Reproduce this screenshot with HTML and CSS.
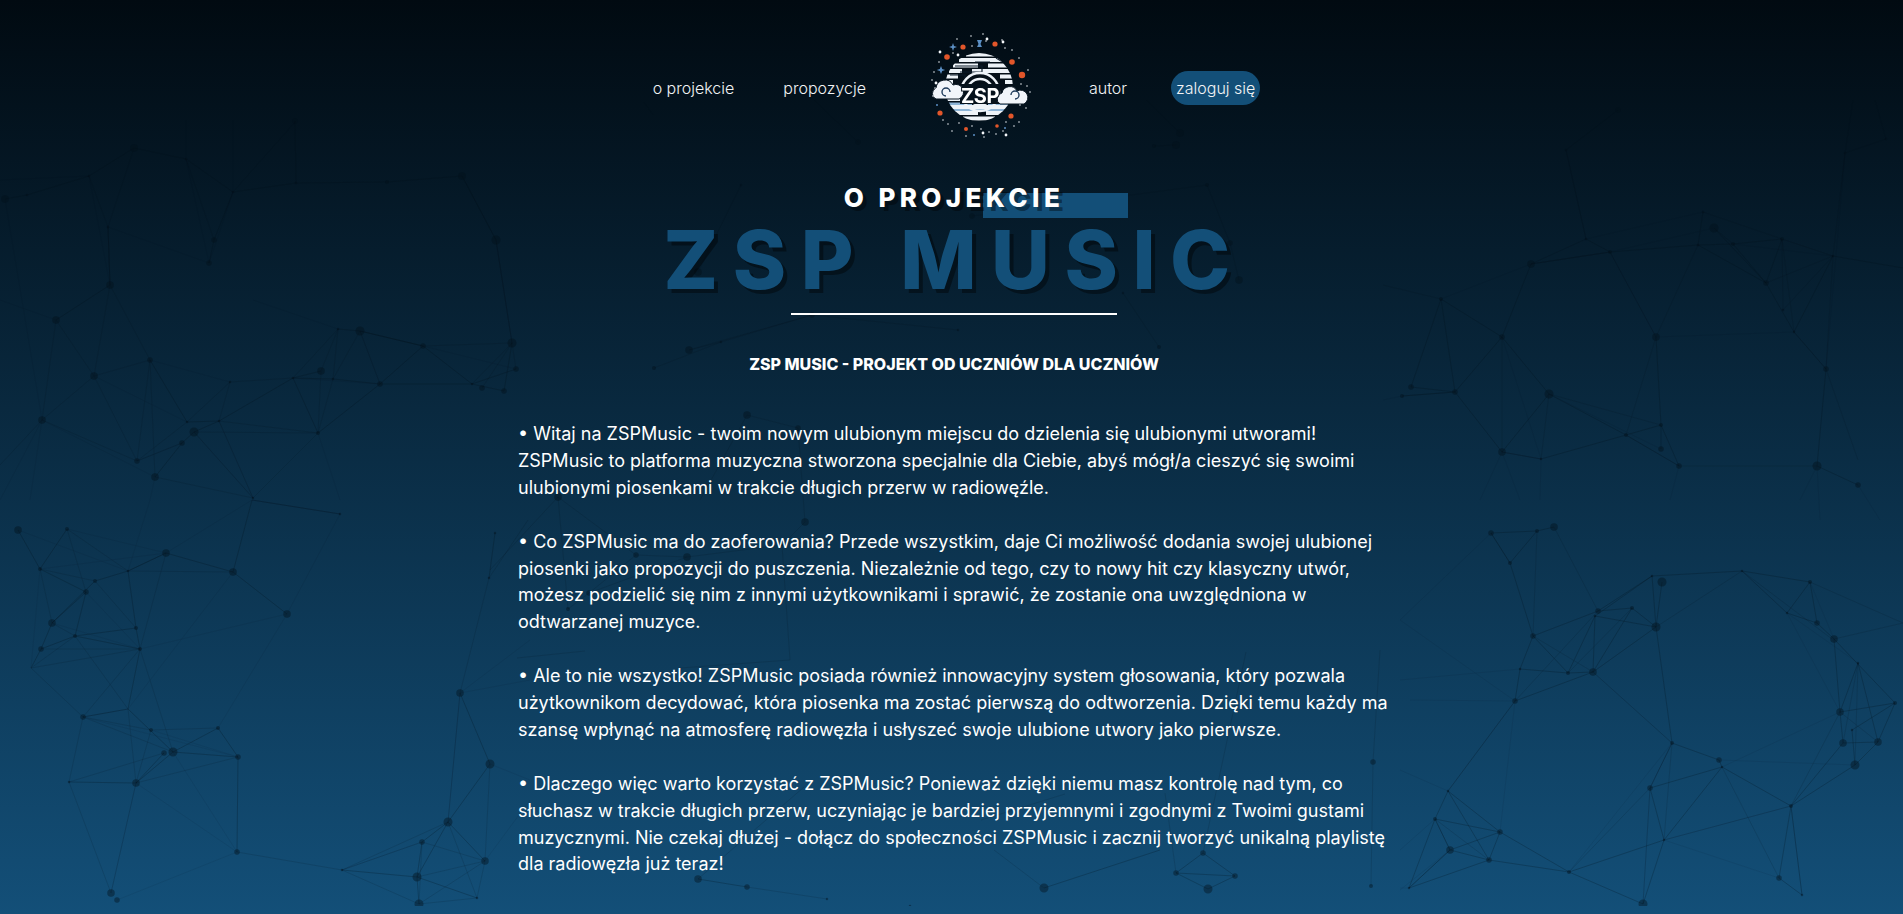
FILE: index.html
```html
<!DOCTYPE html>
<html lang="pl">
<head>
<meta charset="utf-8">
<title>ZSP Music</title>
<link rel="stylesheet" href="styles.css">
</head>
<body>
<svg class="net" viewBox="0 0 1903 906" width="1903" height="906" aria-hidden="true">
  <path class="l1" d="M18 530L40 569M67 529L40 569M40 569L86 592M95 581L52 623M86 592L52 623M166 553L128 571L95 581M86 592L75 636M128 571L136 628M52 623L41 649M75 636L41 649M41 649L31 668M140 649L128 709M128 709L83 717M128 709L173 752M173 752L218 728M173 752L238 757M218 728L238 757M173 752L136 783M164 753L136 783M69 782L136 783M233 572L287 614M166 553L233 572M233 572L252 500M238 757L237 852M342 870L417 877M448 822L422 842M448 822L417 877M422 842L417 877M417 877L477 898M417 877L419 904M448 822L485 861M448 822L490 764M460 693L490 764M489 578L495 533M252 500L340 514M136 628L140 649M75 636L136 628M75 636L140 649"/>
  <path class="l1" d="M134 148L186 159L233 192L296 183M89 176L134 148M27 195L89 176M5 199L27 195M233 192L214 240L209 263M108 227L110 285M110 285L56 320M150 360L187 422M137 461L182 443L194 432L219 421L293 378M155 477L182 443M187 422L219 421M293 378L333 379L380 384L423 346L472 384M380 384L472 384M338 329L360 331L423 346M472 384L504 391M423 346L360 331M472 384L516 369M512 343L504 391M296 183L387 182L462 176L496 240L512 343M295 121L296 183M318 433L380 384M293 378L318 433M321 371L293 378"/>
  <path class="l1" d="M1618 110L1566 150L1586 239L1610 252L1531 264L1502 337M1586 239L1531 264M1441 299L1502 337M1441 299L1411 387M1441 299L1455 392M1411 387L1455 392M1402 396L1455 392M1502 337L1455 392M1502 337L1549 394M1455 392L1502 452M1549 394L1502 452M1549 394L1626 435M1502 452L1541 459L1626 435M1626 435L1661 425L1661 449M1626 435L1679 466M1661 425L1679 466M1656 337L1661 425M1610 252L1698 245L1733 244L1782 239M1714 228L1766 283L1794 332L1826 369M1703 212L1698 245M1733 244L1766 283M1782 239L1766 283M1782 239L1833 256L1903 268M1833 256L1794 332M1817 466L1858 485M1826 369L1817 466M1698 245L1766 283"/>
  <path class="l1" d="M1491 533L1537 531L1554 527M1537 531L1510 563M1491 533L1510 563M1510 563L1533 636M1598 611L1652 576M1595 616L1652 576M1598 611L1632 608L1656 627M1595 616L1656 627M1652 576L1656 627M1662 582L1656 627M1533 636L1598 611M1533 636L1520 669M1533 636L1568 673M1520 669L1568 673L1593 672M1595 616L1593 672M1568 673L1595 616M1515 701L1520 669M1515 701L1593 672M1593 672L1656 627M1632 608L1593 672M1652 576L1742 571L1810 582L1787 613L1817 623M1810 582L1817 623M1742 571L1787 613M1817 623L1834 639L1895 703M1834 639L1840 712M1858 663L1840 712M1858 663L1878 742M1840 712L1895 703M1843 743L1878 742M1855 765L1878 742M1855 765L1852 730M1895 703L1878 742M1843 743L1840 712M1852 730L1895 703M1672 743L1719 760L1722 767M1672 743L1650 788M1650 788L1722 767M1650 788L1664 840M1722 767L1664 840M1722 767L1791 806L1855 765M1791 806L1843 743M1791 806L1779 878M1791 806L1802 895M1779 878L1802 895M1656 627L1672 743M1664 840L1643 904M1448 791L1435 819L1450 850M1448 791L1500 832L1489 860L1450 850L1500 832M1448 791L1489 860M1435 819L1500 832M1435 819L1409 888M1409 888L1450 850M1409 888L1489 860M1489 860L1569 872L1500 832M1569 872L1643 904M1569 872L1664 840M1176 873L1235 876L1203 853L1176 873M1208 889L1235 876M1176 873L1208 889M1044 888L1160 850M698 879L747 887"/>
  <path class="l2" d="M67 529L128 571M128 571L166 553M40 569L52 623M40 569L95 581M67 529L86 592M95 581L136 628M75 636L52 623M31 668L75 636M31 668L140 649M41 649L140 649M75 636L128 709M140 649L83 717M31 668L83 717M83 717L151 730L218 728M83 717L173 752M128 709L136 783M151 730L136 783M140 649L173 752M83 717L69 782M69 782L164 753M136 783L238 757M136 783L111 893M69 782L111 893M128 571L233 572M166 553L140 649M342 870L448 822M342 870L422 842M342 870L419 904M422 842L485 861M417 877L485 861M448 822L477 898M422 842L419 904M419 904L477 898M485 861L477 898M485 861L419 904M485 861L490 764M460 693L448 822M237 852L342 870M460 693L489 578M489 578L528 520"/>
  <path class="l2" d="M134 148L108 227M89 176L108 227M108 227L110 285M56 320L94 376L110 285M94 376L150 360L110 285M42 420L94 376M56 320L42 420M94 376L137 461M150 360L137 461M155 477L150 360M187 422L137 461M230 382L187 422M230 382L219 421M230 382L293 378M194 432L318 433M219 421L318 433M321 371L318 433M338 329L333 379M338 329L293 378M360 331L333 379M360 331L380 384M338 329L321 371M333 379L318 433M512 343L423 346M512 343L482 388M512 343L472 384M155 477L253 498M194 432L253 498M318 433L253 498M219 421L253 498M42 420L0 465M42 420L137 461M512 343L516 369M186 159L214 240M233 192L296 121M462 176L496 240"/>
  <path class="l2" d="M1549 394L1661 425M1502 337L1502 452M1656 337L1626 435M1531 264L1610 252M1733 244L1714 228M1703 212L1782 239M1766 283L1833 256M1782 239L1794 332M1782 239L1783 310M1833 256L1783 310M1833 256L1845 153L1853 100M1845 153L1886 139L1875 100M1826 369L1833 256M1826 369L1858 460M1817 466L1679 466M1402 396L1455 392M1541 459L1549 394M1383 285L1441 299M1656 337L1610 252M1656 337L1698 245"/>
  <path class="l2" d="M1554 527L1598 611M1491 533L1510 563M1537 531L1533 636M1533 636L1593 672M1568 673L1632 608M1515 701L1598 611M1515 701L1448 791M1656 627L1742 571M1593 672L1672 743M1742 571L1832 639M1810 582L1903 623M1834 639L1903 623M1858 663L1855 765M1840 712L1878 742M1843 743L1858 663M1650 788L1643 904M1672 743L1664 840M1722 767L1779 878M1664 840L1791 806M1840 712L1791 806M1569 872L1650 788M1435 819L1450 850M1450 850L1409 888M1489 860L1435 819M1448 791L1515 701"/>
  <path class="l2" d="M747 415L798 428M747 415L700 500M558 497L636 555M636 555L687 557L782 545L805 522M589 593L636 555M589 593L568 609M568 609L558 497M558 497L490 570M687 557L589 593M798 428L805 522M698 879L804 787M747 887L827 899M1044 888L994 850M1065 794L981 820M1165 793L1176 873M1373 762L1371 886M1380 650L1373 762M1246 652L1203 853M585 651L517 658M680 668L790 660M790 660L782 545M972 216L1207 185M698 272L741 185M812 315L689 350M689 350L721 342L654 368M812 315L721 342M1123 293L1159 347M1230 243L1239 280M1207 185L1230 243M644 102L653 115M814 100L858 142M1146 100L1180 133M1154 146L1176 145M958 330L812 315"/>
  <path class="l3" d="M18 530L128 571M67 529L166 553M40 569L166 553M31 668L40 569M86 592L140 649M52 623L140 649M83 717L128 709M83 717L238 757M151 730L238 757M136 783L237 852M173 752L237 852M117 900L237 852M111 893L136 783M287 614L140 649M233 572L128 709M218 728L287 614M287 614L340 514M422 842L342 870M448 822L460 693M460 693L530 640M460 693L530 680M490 764L530 780M485 861L530 800M340 514L252 500M166 553L252 500M128 571L150 500"/>
  <path class="l3" d="M0 300L56 320M5 199L42 420M89 176L110 285M186 159L209 263M108 227L209 263M233 192L209 263M0 180L89 176M186 120L186 159M233 120L233 192M94 376L187 422M42 420L155 477M42 420L0 500M42 420L30 500M155 477L150 500M219 421L253 498M194 432L253 498M360 331L380 384M318 433L340 500M338 329L253 300M230 382L150 360M380 384L293 378M516 369L423 346M496 240L512 343"/>
  <path class="l3" d="M1502 337L1541 459M1502 452L1541 459M1502 452L1480 500M1541 459L1540 500M1502 452L1520 500M1679 466L1670 500M1817 466L1800 500M1817 466L1820 520M1858 485L1880 520M1656 337L1794 332M1610 252L1656 337M1531 264L1441 299M1586 239L1703 212M1610 252L1714 228M1733 244L1833 256M1826 369L1794 332M1586 239L1566 150M1845 153L1826 369M1661 449L1549 394M1679 466L1626 435M1402 396L1383 400"/>
  <path class="l3" d="M1491 533L1400 620M1515 701L1400 620M1515 701L1410 700M1520 669L1400 680M1593 672L1672 743M1672 743L1650 788M1855 765L1719 760M1840 712L1722 767M1787 613L1858 663M1810 582L1834 639M1840 712L1787 613M1791 806L1664 840M1802 895L1791 806M1664 840L1779 878M1643 904L1650 788M1569 872L1672 743M1448 791L1400 770M1435 819L1400 850M1409 888L1400 888M1450 850L1400 890M1515 701L1500 832"/>
  <path class="n1" d="M340 514h.01M489 578h.01M495 533h.01M128 571h.01M69 782h.01M342 870h.01M477 898h.01M186 159h.01M296 183h.01M233 192h.01M89 176h.01M27 195h.01M108 227h.01M187 422h.01M219 421h.01M230 382h.01M293 378h.01M333 379h.01M338 329h.01M472 384h.01M253 498h.01M1566 150h.01M1586 239h.01M1541 459h.01M1794 332h.01M1783 310h.01M1833 256h.01M1698 245h.01M1703 212h.01M1845 153h.01M1886 139h.01M1652 576h.01M1742 571h.01M1787 613h.01M1858 663h.01M1852 730h.01M1595 616h.01M1520 669h.01M1722 767h.01M1664 840h.01M1448 791h.01M1409 888h.01M1802 895h.01M721 342h.01M1123 293h.01M958 330h.01M741 185h.01M782 545h.01M910 906h.01M827 899h.01"/>
  <path class="n2" d="M67 529h.01M40 569h.01M95 581h.01M136 628h.01M75 636h.01M140 649h.01M151 730h.01M218 728h.01M318 433h.01M387 182h.01M1402 396h.01M1626 435h.01M1610 252h.01M1733 244h.01M1782 239h.01M1441 299h.01M1661 425h.01M1537 531h.01M1510 563h.01M1810 582h.01M1895 703h.01M1568 673h.01M1672 743h.01M1791 806h.01M1435 819h.01M1632 608h.01M1569 872h.01M654 368h.01M1159 347h.01M1207 185h.01M568 609h.01M1371 886h.01M1154 146h.01"/>
  <path class="n3" d="M86 592h.01M41 649h.01M83 717h.01M164 753h.01M238 757h.01M237 852h.01M422 842h.01M117 900h.01M516 369h.01M150 360h.01M214 240h.01M209 263h.01M295 121h.01M137 461h.01M182 443h.01M380 384h.01M423 346h.01M482 388h.01M504 391h.01M1411 387h.01M1455 392h.01M1502 337h.01M1766 283h.01M1826 369h.01M1858 485h.01M1618 110h.01M1661 449h.01M1679 466h.01M1491 533h.01M1817 623h.01M1598 611h.01M1533 636h.01M1515 701h.01M1650 788h.01M1500 832h.01M1489 860h.01M1719 760h.01M1779 878h.01M747 887h.01M1373 762h.01M1230 243h.01M812 315h.01M972 216h.01M798 428h.01M636 555h.01M589 593h.01M858 142h.01M1176 873h.01M1235 876h.01M1203 853h.01"/>
  <path class="n4" d="M18 530h.01M166 553h.01M233 572h.01M287 614h.01M52 623h.01M136 783h.01M111 893h.01M460 693h.01M485 861h.01M134 148h.01M110 285h.01M5 199h.01M56 320h.01M94 376h.01M42 420h.01M155 477h.01M321 371h.01M462 176h.01M1531 264h.01M1656 337h.01M1502 452h.01M1840 712h.01M1878 742h.01M1554 527h.01M1593 672h.01M1834 639h.01M1843 743h.01M1450 850h.01M558 497h.01M805 522h.01M687 557h.01M747 415h.01M698 272h.01M1239 280h.01M689 350h.01M698 879h.01M1180 133h.01M1176 145h.01"/>
  <path class="n5" d="M173 752h.01M448 822h.01M417 877h.01M419 904h.01M490 764h.01M194 432h.01M360 331h.01M512 343h.01M496 240h.01M1549 394h.01M1714 228h.01M1817 466h.01M1662 582h.01M1656 627h.01M1855 765h.01M1643 904h.01M1044 888h.01M1208 889h.01"/>
</svg>

<header class="nav">
  <a class="nav-link" href="#projekt">o projekcie</a>
  <a class="nav-link" href="#propozycje">propozycje</a>
  <a class="logo" href="#" aria-label="ZSP Music">
    <svg viewBox="910 18 135 135" width="135" height="135">
      <defs>
        <clipPath id="sphere"><circle cx="979" cy="87" r="34"/></clipPath>
      </defs>
      <g clip-path="url(#sphere)">
        <rect x="940" y="50" width="80" height="75" fill="#050f18"/>
        <path class="lg-w" d="M966 54.500H998M959 60H1008M953 65.500H978M988 65.500H1012M949 71H962M972 71H1014M946 76.500H958M1000 76.500H1014M945 82H953M1005 82H1014"/>
        <path class="lg-blue" d="M947 104H972M988 104H1012M950 110H1008"/>
        <path class="lg-w" d="M946 99H966M992 99H1013M949 107H1010M955 113H978M986 113H1004M963 118.500H995"/>
        <path class="lg-d" d="M955 66H982V72H960M996 58L1006 64M975 62H990M950 75H965V80"/>
        <circle class="lg-ring" cx="980" cy="92" r="19"/>
        <circle class="lg-ring" cx="980" cy="92" r="13"/>
      </g>
      <rect class="lg-gap" x="960" y="84" width="40" height="20"/>
      <path class="lg-cloud" d="M936 99a6 6 0 0 1 0-11a9 9 0 0 1 17-3a7 7 0 0 1 6 14z"/>
      <path class="lg-cloud" d="M1000 104a6 6 0 0 1 2-11a8 8 0 0 1 15-2a7 7 0 0 1 7 13z"/>
      <path class="lg-swirl" d="M950 92a4 4 0 1 0-4 4M1015 99a4 4 0 1 0-4-4"/>
      <text class="lg-text" x="980" y="103" text-anchor="middle">ZSP</text>
      <g class="lg-or">
        <circle cx="963" cy="47" r="2.600"/><circle cx="995" cy="44" r="2.600"/><circle cx="947" cy="57" r="2.800"/><circle cx="1012" cy="62" r="2.800"/><circle cx="1022" cy="75" r="3.200"/><circle cx="940" cy="113" r="2.600"/><circle cx="1011" cy="116" r="2.600"/><circle cx="966" cy="129" r="2"/><circle cx="997" cy="126" r="1.800"/>
      </g>
      <g class="lg-bl">
        <path d="M941 66l1.200 3 3 1-3 1-1.200 3-1.200-3-3-1 3-1zM953 43l1 3 3 1-3 1-1 3-1-3-3-1 3-1z"/>
        <path d="M977 40h5l-1.500 4 1.500 3h-5l1.500-3z"/>
        <circle cx="937" cy="105" r="1"/><circle cx="1005" cy="128" r="1"/><circle cx="974" cy="135" r="1"/>
      </g>
      <path class="lg-dots" d="M986 41h.01M972 46h.01M1005 48h.01M957 39h.01M971 36h.01M983 34h.01M1002 40h.01M1012 50h.01M953 53h.01M939 62h.01M934 72h.01M1019 58h.01M1028 70h.01M1027 86h.01M932 80h.01M933 96h.01M1030 92h.01M1026 108h.01M1020 105h.01M1019 122h.01M1006 122h.01M989 132h.01M981 129h.01M972 126h.01M959 123h.01M948 124h.01M943 120h.01M952 131h.01M966 136h.01M984 137h.01M996 134h.01M1003 131h.01M1014 126h.01M935 88h.01M1021 84h.01"/>
      <path class="lg-dots-big" d="M940 52h.01M1003 42h.01M958 55h.01M936 83h.01M1006 135h.01M983 133h.01M987 39h.01"/>
    </svg>
  </a>
  <a class="nav-link" href="#autor">autor</a>
  <a class="nav-link nav-login" href="#login">zaloguj się</a>
</header>

<main class="content" id="projekt">
  <div class="titles">
    <span class="title-box"></span>
    <h2 class="title-small">O PROJEKCIE</h2>
    <h1 class="title-big">ZSP MUSIC</h1>
  </div>
  <hr class="rule">
  <h3 class="lead">ZSP MUSIC - PROJEKT OD UCZNIÓW DLA UCZNIÓW</h3>
  <div class="copy">
    <p>• Witaj na ZSPMusic - twoim nowym ulubionym miejscu do dzielenia się ulubionymi utworami! ZSPMusic to platforma muzyczna stworzona specjalnie dla Ciebie, abyś mógł/a cieszyć się swoimi ulubionymi piosenkami w trakcie długich przerw w radiowęźle.</p>
    <p>• Co ZSPMusic ma do zaoferowania? Przede wszystkim, daje Ci możliwość dodania swojej ulubionej piosenki jako propozycji do puszczenia. Niezależnie od tego, czy to nowy hit czy klasyczny utwór, możesz podzielić się nim z innymi użytkownikami i sprawić, że zostanie ona uwzględniona w odtwarzanej muzyce.</p>
    <p>• Ale to nie wszystko! ZSPMusic posiada również innowacyjny system głosowania, który pozwala użytkownikom decydować, która piosenka ma zostać pierwszą do odtworzenia. Dzięki temu każdy ma szansę wpłynąć na atmosferę radiowęzła i usłyszeć swoje ulubione utwory jako pierwsze.</p>
    <p>• Dlaczego więc warto korzystać z ZSPMusic? Ponieważ dzięki niemu masz kontrolę nad tym, co słuchasz w trakcie długich przerw, uczyniając je bardziej przyjemnymi i zgodnymi z Twoimi gustami muzycznymi. Nie czekaj dłużej - dołącz do społeczności ZSPMusic i zacznij tworzyć unikalną playlistę dla radiowęzła już teraz!</p>
  </div>
</main>
</body>
</html>
```
FILE: styles.css
```css
* { box-sizing: border-box; }
html, body { margin: 0; padding: 0; }
body {
  position: relative;
  min-height: 914px;
  height: 914px;
  overflow: hidden;
  background: linear-gradient(180deg, #010a11 0%, #134f78 100%);
  color: #fff;
  font-family: Inter, "Liberation Sans", sans-serif;
}
.net { position: absolute; left: 0; top: 0; fill: none; pointer-events: none; filter: blur(.4px); }
.l1, .l2, .l3 { stroke: #03111b; stroke-width: 1; fill: none; }
.l1 { stroke-opacity: .24; }
.l2 { stroke-opacity: .13; }
.l3 { stroke-opacity: .07; }
.n1, .n2, .n3, .n4, .n5 { stroke: #03111b; stroke-opacity: .42; stroke-linecap: round; fill: none; }
.n1 { stroke-width: 2.500px; }
.n2 { stroke-width: 4px; }
.n3 { stroke-width: 5.500px; }
.n4 { stroke-width: 7.500px; }
.n5 { stroke-width: 9px; }

.nav {
  position: relative;
  display: flex;
  justify-content: center;
  align-items: center;
  gap: 39px;
  padding: 18px 0 0 5px;
}
.nav-link {
  position: relative;
  top: 2px;
  padding: 5px;
  color: #f2f3f5;
  font-size: 16px;
  font-weight: 300;
  line-height: 24px;
  text-decoration: none;
}
.nav-login {
  background: #134f78;
  border-radius: 17px;
}
.logo { display: block; width: 135px; height: 135px; }
.logo svg { display: block; filter: blur(.35px); }
.lg-w { stroke: #eef3f8; stroke-width: 4; fill: none; }
.lg-blue { stroke: #8db4d6; stroke-width: 3; fill: none; }
.lg-d { stroke: #0a1a28; stroke-width: 1.200; fill: none; }
.lg-ring { stroke: #eef3f8; stroke-width: 2.400; fill: none; }
.lg-gap { fill: #06121c; }
.lg-cloud { fill: #f1f5fa; stroke: #0a1824; stroke-width: 1; }
.lg-swirl { stroke: #1f3c5c; stroke-width: 1.400; fill: none; }
.lg-text {
  fill: #fff;
  stroke: #07131e;
  stroke-width: 2px;
  paint-order: stroke;
  font-family: Inter, sans-serif;
  font-size: 20px;
  font-weight: 700;
  letter-spacing: -.5px;
}
.lg-or circle { fill: #e2562a; }
.lg-bl { fill: #5b8fc4; }
.lg-dots { stroke: #e9eef4; stroke-width: 1.600; stroke-linecap: round; fill: none; }
.lg-dots-big { stroke: #f4f7fa; stroke-width: 2.800; stroke-linecap: round; fill: none; }

.content {
  position: relative;
  display: flex;
  flex-direction: column;
  align-items: center;
  padding-left: 5px;
}
.titles {
  position: relative;
  display: flex;
  flex-direction: column;
  align-items: center;
  margin-top: 29px;
}
.title-box {
  position: absolute;
  left: calc(50% + 29px);
  top: 11px;
  width: 145px;
  height: 25px;
  background: #134f78;
}
.title-small {
  position: relative;
  margin: 0;
  font-size: 26px;
  font-weight: 800;
  line-height: 31px;
  letter-spacing: 4.400px;
  text-shadow: 4px 4px 0 rgba(0, 0, 0, .4);
}
.title-big {
  position: relative;
  margin: -2px 0 0;
  color: #134f78;
  font-size: 81px;
  font-weight: 800;
  line-height: 98px;
  letter-spacing: 14.500px;
  text-shadow: 4px 4px 0 rgba(0, 0, 0, .4);
}
.rule {
  width: 326px;
  height: 2px;
  margin: 4px 0 0;
  border: 0;
  background: #fff;
}
.lead {
  margin: 40px 0 0;
  font-size: 16px;
  font-weight: 800;
  line-height: 19px;
}
.copy {
  width: 872px;
  margin-top: 47px;
  font-size: 18px;
  line-height: 26.900px;
}
.copy p { margin: 0 0 26.900px; }
```
